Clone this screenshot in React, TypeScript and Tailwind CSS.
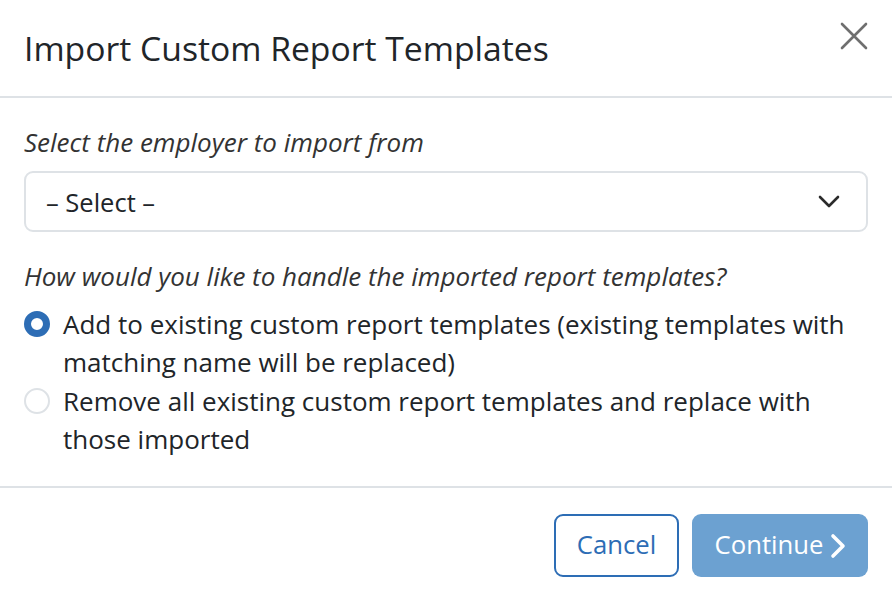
import React from "react";

export default function App() {
  return (
    <div
      className="w-[892px] h-[596px] bg-white flex flex-col text-[#212529] overflow-hidden"
      style={{ fontFamily: '"Open Sans", sans-serif' }}
    >
      <div className="h-[98px] flex items-center justify-between pl-[24px] pr-[24px] border-b-2 border-[#dee2e6] shrink-0">
        <h1 className="text-[33.7px] leading-[45px] font-medium">Import Custom Report Templates</h1>
        <button className="w-[28px] h-[28px] -mt-[24px] flex items-center justify-center">
          <svg width="28" height="28" viewBox="0 0 28 28">
            <path d="M2 2 L26 26 M26 2 L2 26" stroke="#6f6f6f" strokeWidth="2.6" strokeLinecap="round" />
          </svg>
        </button>
      </div>

      <div className="flex flex-col px-[24px] pt-[26px] pb-[28px] border-b-2 border-[#dee2e6] shrink-0">
        <p className="italic text-[26px] leading-[36px] text-[#333]">Select the employer to import from</p>
        <div className="mt-[11px] h-[61px] border-2 border-[#dee2e6] rounded-[9px] flex items-center justify-between pl-[20px] pr-[26px]">
          <span className="text-[25.5px] leading-[36px]">– Select –</span>
          <svg width="22" height="14" viewBox="0 0 22 14">
            <path d="M2 2 L11 11 L20 2" stroke="#2b2b2b" strokeWidth="2.6" fill="none" strokeLinecap="round" strokeLinejoin="round" />
          </svg>
        </div>
        <p className="mt-[26px] italic text-[26px] leading-[36px] text-[#333]">
          How would you like to handle the imported report templates?
        </p>
        <div className="mt-[11px] flex flex-col gap-[1px]">
          <label className="flex items-start gap-[13px]">
            <span className="mt-[6px] w-[26px] h-[26px] rounded-full border-[7.5px] border-[#2d6db5] bg-white shrink-0" />
            <span className="text-[26px] leading-[38px]">
              Add to existing custom report templates (existing templates with matching name will be replaced)
            </span>
          </label>
          <label className="flex items-start gap-[13px]">
            <span className="mt-[6px] w-[26px] h-[26px] rounded-full border-2 border-[#dee2e6] bg-white shrink-0" />
            <span className="text-[26px] leading-[38px]">
              Remove all existing custom report templates and replace with those imported
            </span>
          </label>
        </div>
      </div>

      <div className="flex justify-end items-start gap-[13px] px-[24px] pt-[26px]">
        <button className="h-[63px] w-[125px] border-2 border-[#2d6db5] rounded-[9px] text-[#2d6db5] text-[25.7px] flex items-center justify-center">
          Cancel
        </button>
        <button className="h-[63px] w-[176px] bg-[#6ca1d1] rounded-[9px] text-white text-[25.7px] flex items-center justify-center gap-[6px] pl-[2px]">
          <span>Continue</span>
          <svg width="18" height="26" viewBox="0 0 18 26">
            <path d="M4 3 L14 13 L4 23" stroke="#ffffff" strokeWidth="3.6" fill="none" strokeLinecap="round" strokeLinejoin="round" />
          </svg>
        </button>
      </div>
    </div>
  );
}
